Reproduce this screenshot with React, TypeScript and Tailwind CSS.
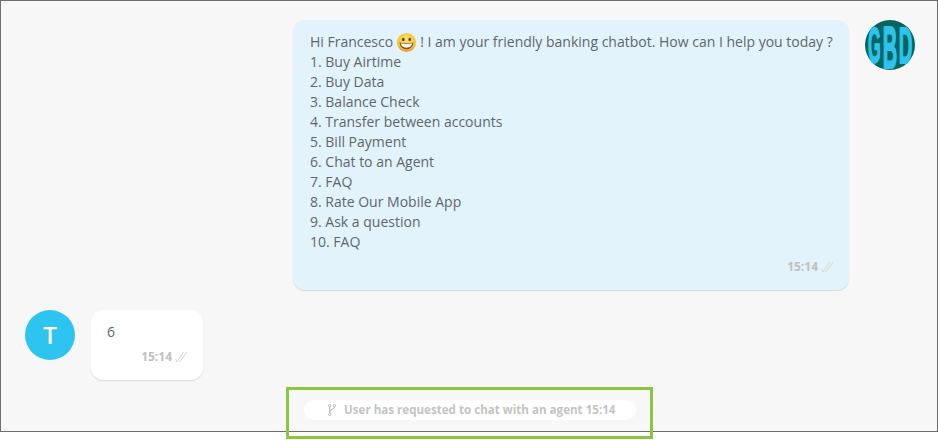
const menu = [
  "1. Buy Airtime",
  "2. Buy Data",
  "3. Balance Check",
  "4. Transfer between accounts",
  "5. Bill Payment",
  "6. Chat to an Agent",
  "7. FAQ",
  "8. Rate Our Mobile App",
  "9. Ask a question",
  "10. FAQ",
];

function Ticks() {
  return (
    <svg width="13" height="12" viewBox="0 0 13 12" fill="none" stroke="#d6d6d6" strokeWidth="1" className="ml-[3px]">
      <path d="M0.5 8 L2 11 L8.5 1" />
      <path d="M4.5 11 L12 1" />
    </svg>
  );
}

function Time() {
  return (
    <div className="flex items-center justify-end text-[12px] leading-[16px] font-bold text-[#bfbfbf]">
      <span>15:14</span>
      <Ticks />
    </div>
  );
}

function Grin() {
  return (
    <svg width="19" height="19" viewBox="0 0 20 20" className="mx-[4px] shrink-0">
      <defs>
        <radialGradient id="face" cx="0.5" cy="0.35" r="0.7">
          <stop offset="0" stopColor="#fde36f" />
          <stop offset="0.7" stopColor="#f8bf35" />
          <stop offset="1" stopColor="#e98a1a" />
        </radialGradient>
      </defs>
      <circle cx="10" cy="10" r="10" fill="url(#face)" />
      <ellipse cx="6.6" cy="6.8" rx="1.3" ry="1.8" fill="#5b3a14" />
      <ellipse cx="13.4" cy="6.8" rx="1.3" ry="1.8" fill="#5b3a14" />
      <path d="M2.8 10 Q10 12.2 17.2 10 Q16.8 17 10 17 Q3.2 17 2.8 10 Z" fill="#7a4a16" />
      <path d="M4 10.9 Q10 12.6 16 10.9 Q15.6 15.4 10 15.4 Q4.4 15.4 4 10.9 Z" fill="#ffffff" />
    </svg>
  );
}

function BotAvatar() {
  return (
    <svg width="50" height="50" viewBox="0 0 50 50" className="shrink-0 overflow-visible">
      <circle cx="25" cy="25" r="25" fill="#07645f" />
      <g fill="#2cc4ec" stroke="#2cc4ec" strokeWidth="0.7" fontFamily="'Liberation Sans', sans-serif" fontWeight="700" fontSize="20" textAnchor="middle">
        <text transform="translate(9.5 43) scale(0.82 2.5)">G</text>
        <text transform="translate(25 47.5) scale(1 2.95)">B</text>
        <text transform="translate(40.5 43) scale(0.95 2.5)">D</text>
      </g>
    </svg>
  );
}

export default function App() {
  return (
    <div className="relative h-[440px] w-[938px] overflow-hidden bg-white font-['Open_Sans',sans-serif] text-[14px] leading-[20px] text-[#5f6670]">
      <div className="flex h-[432px] flex-col border border-[#6e6e6e] bg-[#f7f7f7] pt-[19px] pr-[21px] pl-[24px]">
        <div className="flex justify-end gap-[16px] pr-[1px]">
          <div className="h-[270px] w-[556px] rounded-[12px] bg-[#e2f3fb] pt-[12px] pr-[15px] pl-[17px] shadow-[0_1px_1px_rgba(0,0,0,0.12)]">
            <div className="flex h-[20px] items-center whitespace-nowrap">
              Hi Francesco
              <Grin />
              ! I am your friendly banking chatbot. How can I help you today ?
            </div>
            {menu.map((item) => (
              <div key={item}>{item}</div>
            ))}
            <div className="mt-[7px]">
              <Time />
            </div>
          </div>
          <BotAvatar />
        </div>

        <div className="mt-[20px] flex gap-[16px]">
          <div className="flex h-[50px] w-[50px] items-center justify-center rounded-full bg-[#2dc5ef] text-[24px] font-semibold text-white">
            T
          </div>
          <div className="h-[70px] w-[112px] rounded-[12px] bg-white pt-[12px] pr-[15px] pl-[16px] shadow-[0_1px_1px_rgba(0,0,0,0.12)]">
            <div>6</div>
            <div className="mt-[7px]">
              <Time />
            </div>
          </div>
        </div>

        <div className="mt-[20px] ml-[279px] flex h-[20px] w-[332px] items-center rounded-full bg-white pl-[24px] text-[11.6px] font-bold text-[#c4c4c4]">
          <svg width="8" height="12" viewBox="0 0 8 12" fill="none" stroke="#b5b5b5" strokeWidth="1" className="mr-[8px]">
            <circle cx="1.7" cy="1.7" r="1.2" />
            <circle cx="1.7" cy="10.3" r="1.2" />
            <circle cx="6.5" cy="1.7" r="1.2" />
            <path d="M1.7 3 V9 M1.7 7.5 C2 5 6.5 5.5 6.5 3" />
          </svg>
          User has requested to chat with an agent 15:14
        </div>
      </div>

      {/* green highlight drawn over the screenshot */}
      <div className="absolute top-[387px] left-[286px] h-[52px] w-[367px] border-[3px] border-[#8cc63f]" />
    </div>
  );
}
